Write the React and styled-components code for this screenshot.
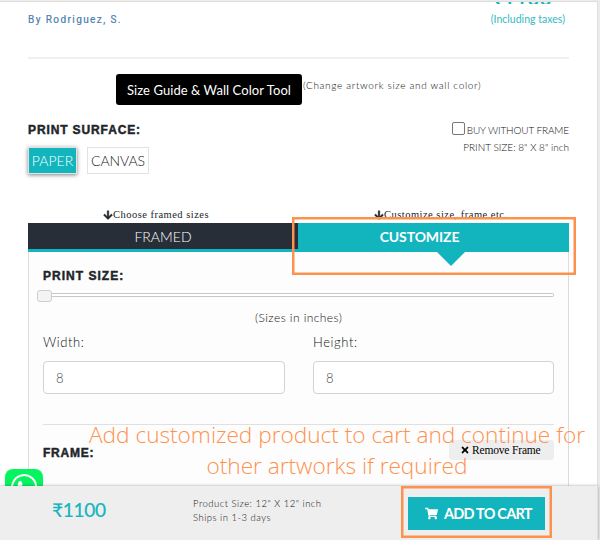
import React from "react";
import styled, { createGlobalStyle, css } from "styled-components";
import { FaArrowDown, FaShoppingCart, FaTimes } from "react-icons/fa";

const TEAL = "#12b5bd";
const ORANGE = "#fd924f";

const GlobalStyle = createGlobalStyle`
  * { box-sizing: border-box; }
  body { margin: 0; overflow: hidden; background: #ebebeb; }
`;

const light = css`
  font-family: Lato, "Liberation Sans", sans-serif;
  font-weight: 300;
  white-space: nowrap;
`;

const Page = styled.div`
  position: relative;
  display: flex;
  flex-direction: column;
  width: 600px;
  height: 540px;
  overflow: hidden;
  background: #ebebeb;
`;

const Sheet = styled.main`
  width: 598px;
  height: 485px;
  margin-top: 1px;
  padding: 0 28px;
  overflow: hidden;
  background: #fff;
  border-top: 1px solid #dedede;
  border-right: 1px solid #e0e0e0;
`;

const Header = styled.header`
  display: flex;
  justify-content: space-between;
  width: 541px;
  height: 57px;
  border-bottom: 2px solid #f1f1f1;
`;

const Artist = styled.a`
  margin-top: 10px;
  font: 400 10px/16px Roboto, sans-serif;
  -webkit-text-stroke: 0.2px #4b7fb1;
  letter-spacing: 1.42px;
  color: #4b7fb1;
  white-space: nowrap;
`;

const HeaderPrice = styled.div`
  display: flex;
  flex-direction: column;
  align-items: flex-end;
  padding-right: 4px;
  color: ${TEAL};
  font-family: Lato, sans-serif;
`;

const Amount = styled.div`
  display: flex;
  align-items: flex-end;
  height: 2px;
  margin-right: 13px;
  overflow: hidden;
  font-size: 20px;
  font-weight: 700;
  line-height: 20px;
  span { margin-bottom: -4px; letter-spacing: 0.6px; }
`;

const Taxes = styled.div`
  margin-top: 7px;
  font-size: 10.5px;
  line-height: 16px;
  letter-spacing: 0.02px;
  color: #35b9c2;
  white-space: nowrap;
`;

const GuideRow = styled.div`
  display: flex;
  height: 64px;
  padding: 15px 0 0 88px;
`;

const GuideButton = styled.button`
  ${light}
  width: 186px;
  height: 31px;
  padding: 0;
  border: 0;
  border-radius: 3px;
  background: #000;
  color: #fff;
  font-weight: 400;
  font-size: 13px;
  letter-spacing: 0.07px;
`;

const GuideNote = styled.span`
  ${light}
  margin: 3px 0 0 1px;
  font-size: 10px;
  line-height: 16px;
  letter-spacing: 0.66px;
  color: #111;
`;

const Heading = styled.h3`
  margin: 0;
  font: 700 12px/15px "Liberation Sans", Arial, sans-serif;
  -webkit-text-stroke: 0.45px #212529;
  letter-spacing: ${(p) => p.$spacing || "0.88px"};
  color: #212529;
  white-space: nowrap;
`;

const SurfaceRow = styled.section`
  display: flex;
  justify-content: space-between;
  width: 541px;
  height: 83px;
`;

const SurfaceOptions = styled.div`
  display: flex;
  gap: 10px;
  margin-top: 9px;
`;

const SurfaceOption = styled.button`
  ${light}
  width: ${(p) => (p.$active ? 49 : 62)}px;
  height: 27px;
  padding: 0;
  font-size: 14px;
  letter-spacing: ${(p) => (p.$active ? "0px" : "-0.05px")};
  color: ${(p) => (p.$active ? "#fff" : "#222")};
  background: ${(p) => (p.$active ? TEAL : "#fff")};
  border: 1px solid #e2e2e2;
  box-shadow: ${(p) => (p.$active ? "0 1px 4px rgba(0,0,0,.5)" : "none")};
`;

const FrameInfo = styled.div`
  ${light}
  display: flex;
  flex-direction: column;
  align-items: flex-end;
  font-size: 10px;
  color: #111;
`;

const CheckLabel = styled.label`
  display: flex;
  height: 16px;
  line-height: 15px;
  gap: 2px;
  letter-spacing: -0.12px;
`;

const CheckBox = styled.input`
  appearance: none;
  width: 13px;
  height: 13px;
  margin: -1px 0 0;
  border: 1px solid #767676;
  border-radius: 2px;
  background: #fff;
`;

const InfoLine = styled.span`
  line-height: 16px;
  letter-spacing: 0;
`;

const Hints = styled.div`
  display: grid;
  grid-template-columns: 271px 270px;
  width: 541px;
  height: 17px;
`;

const Hint = styled.div`
  display: flex;
  align-items: center;
  height: 17px;
  padding-left: 75px;
  font: 400 10.5px/15px "Liberation Serif", serif;
  letter-spacing: 0.48px;
  color: #212529;
  white-space: nowrap;
  svg { flex: none; stroke: #212529; stroke-width: 25px; }
`;

const Tabs = styled.div`
  display: grid;
  grid-template-columns: 270px 271px;
  width: 541px;
  height: 29px;
  background: ${TEAL};
`;

const Tab = styled.button`
  ${light}
  position: relative;
  height: ${(p) => (p.$active ? 29 : 26)}px;
  padding: ${(p) => (p.$active ? "0 28px 2px 0" : "0")};
  border: 0;
  background: ${(p) => (p.$active ? TEAL : "#272e38")};
  color: #fff;
  font-size: 14px;
  font-weight: ${(p) => (p.$active ? 700 : 300)};
  letter-spacing: ${(p) => (p.$active ? "-0.1px" : "0px")};
`;

const Pointer = styled.span`
  position: absolute;
  top: 29px;
  left: 139px;
  border: 14px solid transparent;
  border-top-color: ${TEAL};
  border-bottom: 0;
`;

const Panel = styled.section`
  width: 541px;
  height: 240px;
  padding: 17px 14px 0;
  background: #fdfdfd;
  border: 1px solid #dcdcdc;
  border-top: 0;
`;

const Slider = styled.div`
  display: flex;
  align-items: center;
  height: 12px;
  margin: 6px 0 0 -6px;
`;

const Thumb = styled.span`
  width: 15px;
  height: 12px;
  border: 1px solid #cfcfcf;
  border-radius: 3px;
  background: #f3f3f3;
`;

const Track = styled.span`
  width: 502px;
  height: 4px;
  margin-top: -2px;
  border: 1px solid #c8c8c8;
  border-left: 0;
  border-radius: 0 2px 2px 0;
  background: #fff;
`;

const Units = styled.div`
  ${light}
  margin: 8px 0 0 212px;
  font-size: 12px;
  line-height: 16px;
  letter-spacing: 0.42px;
  color: #111;
`;

const Fields = styled.div`
  display: grid;
  grid-template-columns: 242px 241px;
  gap: 28px;
  height: 99px;
  border-bottom: 1px solid #e0e0e0;
`;

const Field = styled.label`
  ${light}
  padding-top: 8px;
  font-size: 13px;
  line-height: 16px;
  letter-spacing: 0.58px;
  color: #111;
`;

const Input = styled.input`
  ${light}
  display: block;
  width: 100%;
  height: 33px;
  margin-top: 11px;
  padding: 0 12px;
  border: 1px solid #ced4da;
  border-radius: 4px;
  background: #fff;
  color: #495057;
  font-size: 13px;
`;

const FrameRow = styled.div`
  display: flex;
  justify-content: space-between;
  width: 511px;
  height: 60px;
  padding-top: 15px;
  ${Heading} { margin-top: 6px; }
`;

const RemoveButton = styled.button`
  display: flex;
  align-items: center;
  gap: 2px;
  width: 105px;
  height: 20px;
  padding: 0 0 1px 11px;
  border: 0;
  border-radius: 3px;
  background: #eee;
  color: #000;
  font: 400 11.5px/16px "Liberation Serif", serif;
  letter-spacing: -0.17px;
  white-space: nowrap;
`;

const Bar = styled.footer`
  display: flex;
  width: 598px;
  height: 54px;
  background: #eee;
  border-right: 1px solid #e0e0e0;
  box-shadow: 0 0 3px rgba(0, 0, 0, 0.35);
  z-index: 2;
`;

const BarPrice = styled.div`
  width: 141px;
  margin-left: 52px;
  padding-top: 12px;
  color: ${TEAL};
  font: 400 19px/24px Lato, sans-serif;
  -webkit-text-stroke: 0.2px ${TEAL};
  letter-spacing: -0.25px;
`;

const Delivery = styled.div`
  ${light}
  width: 215px;
  padding-top: 11px;
  font-size: 9.5px;
  line-height: 14px;
  color: #111;
  letter-spacing: 0.49px;
`;

const CartButton = styled.button`
  display: flex;
  align-items: center;
  gap: 6px;
  width: 137px;
  height: 33px;
  margin-top: 11px;
  padding: 0 0 0 17px;
  border: 0;
  background: ${TEAL};
  color: #fff;
  font: 700 14.5px/20px Lato, sans-serif;
  letter-spacing: -0.78px;
  white-space: nowrap;
`;

const ChatBadge = styled.svg`
  position: absolute;
  left: 5px;
  top: 469px;
  width: 38px;
  height: 38px;
`;

const Highlight = styled.div`
  position: absolute;
  z-index: 4;
  left: ${(p) => p.$x}px;
  top: ${(p) => p.$y}px;
  width: ${(p) => p.$w}px;
  height: ${(p) => p.$h}px;
  border: 2px solid ${ORANGE};
  box-shadow: inset 0 0 0 0.5px ${ORANGE};
`;

const Annotation = styled.p`
  position: absolute;
  z-index: 3;
  left: 86px;
  top: 419px;
  width: 502px;
  margin: 0;
  text-align: center;
  color: ${ORANGE};
  font: 300 22.7px/31px "Open Sans", sans-serif;
  letter-spacing: -0.03px;
  white-space: nowrap;
`;

export default function App() {
  return (
    <Page>
      <GlobalStyle />
      <Sheet>
        <Header>
          <Artist>By Rodriguez, S.</Artist>
          <HeaderPrice>
            <Amount><span>₹1100</span></Amount>
            <Taxes>(Including taxes)</Taxes>
          </HeaderPrice>
        </Header>
        <GuideRow>
          <GuideButton>Size Guide &amp; Wall Color Tool</GuideButton>
          <GuideNote>(Change artwork size and wall color)</GuideNote>
        </GuideRow>
        <SurfaceRow>
          <div>
            <Heading>PRINT SURFACE:</Heading>
            <SurfaceOptions>
              <SurfaceOption $active>PAPER</SurfaceOption>
              <SurfaceOption>CANVAS</SurfaceOption>
            </SurfaceOptions>
          </div>
          <FrameInfo>
            <CheckLabel>
              <CheckBox type="checkbox" />
              BUY WITHOUT FRAME
            </CheckLabel>
            <InfoLine>PRINT SIZE: 8" X 8" inch</InfoLine>
          </FrameInfo>
        </SurfaceRow>
        <Hints>
          <Hint><FaArrowDown size={10} />Choose framed sizes</Hint>
          <Hint><FaArrowDown size={10} />Customize size, frame etc.</Hint>
        </Hints>
        <Tabs>
          <Tab>FRAMED</Tab>
          <Tab $active>CUSTOMIZE<Pointer /></Tab>
        </Tabs>
        <Panel>
          <Heading $spacing="1.02px">PRINT SIZE:</Heading>
          <Slider><Thumb /><Track /></Slider>
          <Units>(Sizes in inches)</Units>
          <Fields>
            <Field>Width:<Input defaultValue="8" /></Field>
            <Field>Height:<Input defaultValue="8" /></Field>
          </Fields>
          <FrameRow>
            <Heading $spacing="0.78px">FRAME:</Heading>
            <RemoveButton><FaTimes size={10} />Remove Frame</RemoveButton>
          </FrameRow>
        </Panel>
      </Sheet>
      <ChatBadge viewBox="0 0 38 38">
        <rect width="38" height="38" rx="8" fill="#06f45f" />
        <path d="M7 31l1.900-6.500A12 12 0 1 1 14 29z" fill="none" stroke="#fff" strokeWidth="2" />
        <path d="M14 12.500c1-1 2-1 2.500 0l1 2.400c.3 1-1.400 1.800-1 2.600 1.200 2.200 2.800 3.800 5 4.800l2-1.800 3 1.600c.8 3-3.500 4-5.500 3.200-4-1.500-7.500-5-8.200-8.600-.2-1.500.2-3 1.200-4.200z" fill="#fff" />
      </ChatBadge>
      <Bar>
        <BarPrice>₹1100</BarPrice>
        <Delivery>
          <div>Product Size: 12" X 12" inch</div>
          <div>Ships in 1-3 days</div>
        </Delivery>
        <CartButton><FaShoppingCart size={13} />ADD TO CART</CartButton>
      </Bar>
      <Annotation>
        Add customized product to cart and continue for
        <br />
        other artworks if required
      </Annotation>
      <Highlight $x={292} $y={217} $w={284} $h={58} />
      <Highlight $x={401} $y={486} $w={151} $h={52} />
    </Page>
  );
}
